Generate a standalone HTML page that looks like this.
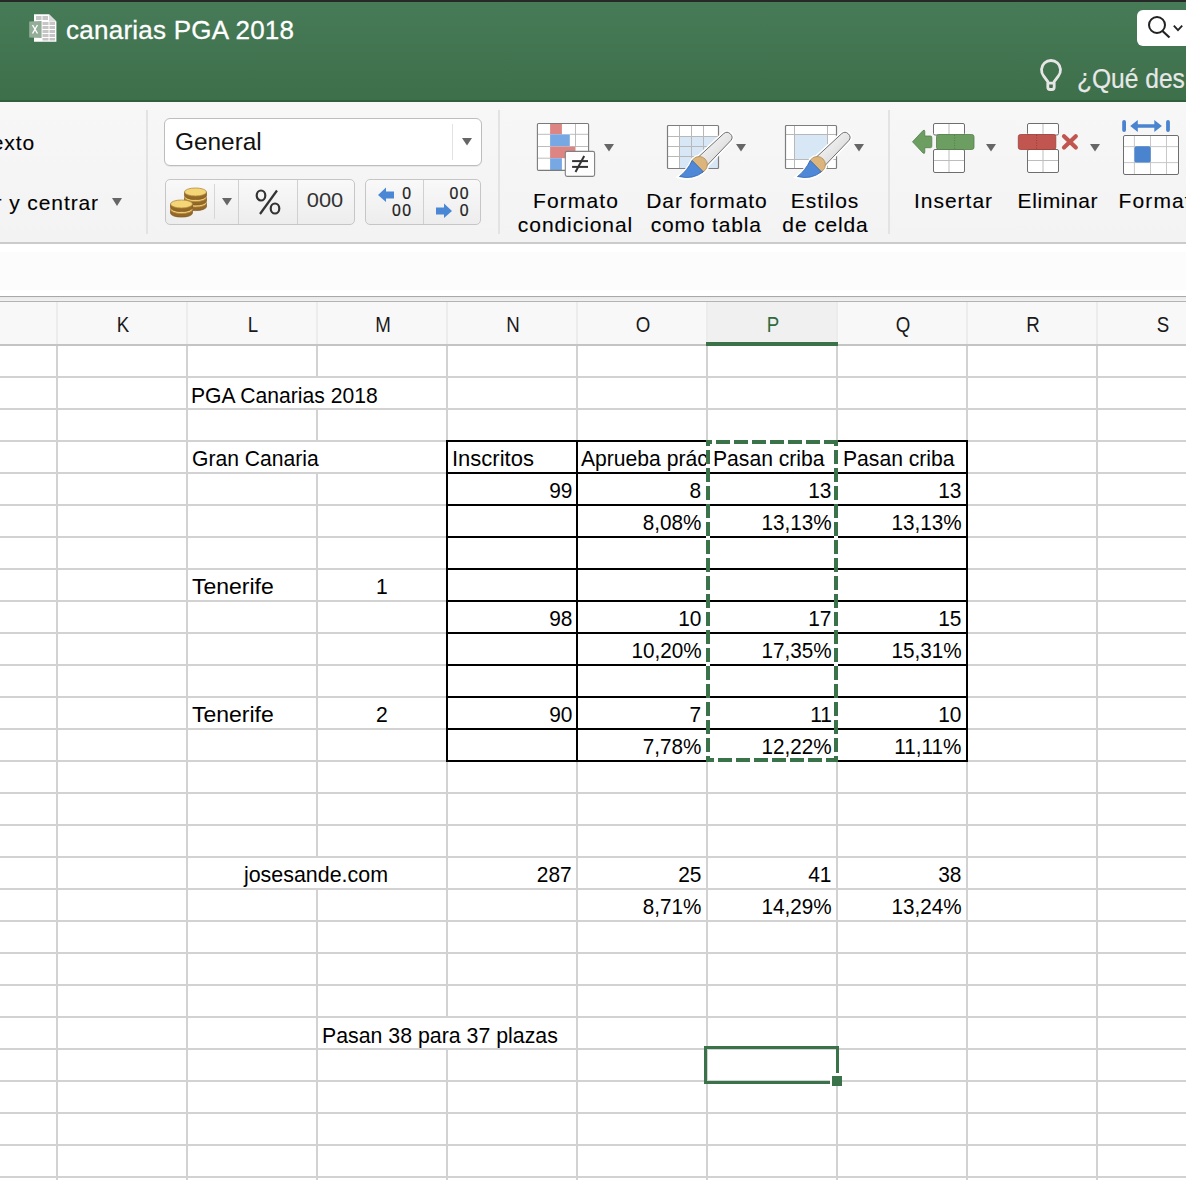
<!DOCTYPE html><html><head><meta charset="utf-8"><style>
html,body{margin:0;padding:0;}
body{width:1186px;height:1180px;overflow:hidden;position:relative;background:#fff;font-family:"Liberation Sans", sans-serif;}
.r{position:absolute;}
.t{position:absolute;white-space:pre;font-family:"Liberation Sans", sans-serif;}
</style></head><body>
<div class="r" style="left:0px;top:0px;width:1186px;height:2px;background:#282828;"></div>
<div class="r" style="left:0px;top:2px;width:1186px;height:100px;background:linear-gradient(#477a56,#3c6f4a);"></div>
<div class="r" style="left:0px;top:100px;width:1186px;height:2px;background:#2f5f3d;"></div>
<div class="r" style="left:0px;top:102px;width:1186px;height:140px;background:linear-gradient(#f7f7f7,#f3f3f3);"></div>
<div class="r" style="left:0px;top:242px;width:1186px;height:2px;background:#cbcbcb;"></div>
<div class="r" style="left:0px;top:244px;width:1186px;height:52px;background:#ffffff;"></div>
<div class="r" style="left:0px;top:252px;width:1186px;height:38px;background:#fcfcfc;"></div>
<div class="r" style="left:0px;top:296px;width:1186px;height:1px;background:#a9a9a9;"></div>
<div class="r" style="left:0px;top:297px;width:1186px;height:4px;background:linear-gradient(#e9e9e9,#f2f2f2);"></div>
<div class="r" style="left:0px;top:301px;width:1186px;height:1px;background:#b3b3b3;"></div>
<div class="r" style="left:0px;top:302px;width:1186px;height:42px;background:#f8f8f8;"></div>
<div class="r" style="left:706px;top:302px;width:131px;height:42px;background:#f0f0f0;"></div>
<div class="r" style="left:0px;top:344px;width:1186px;height:2px;background:#c4c4c4;"></div>
<div class="r" style="left:56px;top:302px;width:2px;height:42px;background:#ececec;"></div>
<div class="r" style="left:56px;top:346px;width:2px;height:834px;background:#d2d2d2;"></div>
<div class="r" style="left:186px;top:302px;width:2px;height:42px;background:#ececec;"></div>
<div class="r" style="left:186px;top:346px;width:2px;height:834px;background:#d2d2d2;"></div>
<div class="r" style="left:316px;top:302px;width:2px;height:42px;background:#ececec;"></div>
<div class="r" style="left:316px;top:346px;width:2px;height:834px;background:#d2d2d2;"></div>
<div class="r" style="left:446px;top:302px;width:2px;height:42px;background:#ececec;"></div>
<div class="r" style="left:446px;top:346px;width:2px;height:834px;background:#d2d2d2;"></div>
<div class="r" style="left:576px;top:302px;width:2px;height:42px;background:#ececec;"></div>
<div class="r" style="left:576px;top:346px;width:2px;height:834px;background:#d2d2d2;"></div>
<div class="r" style="left:706px;top:302px;width:2px;height:42px;background:#ececec;"></div>
<div class="r" style="left:706px;top:346px;width:2px;height:834px;background:#d2d2d2;"></div>
<div class="r" style="left:836px;top:302px;width:2px;height:42px;background:#ececec;"></div>
<div class="r" style="left:836px;top:346px;width:2px;height:834px;background:#d2d2d2;"></div>
<div class="r" style="left:966px;top:302px;width:2px;height:42px;background:#ececec;"></div>
<div class="r" style="left:966px;top:346px;width:2px;height:834px;background:#d2d2d2;"></div>
<div class="r" style="left:1096px;top:302px;width:2px;height:42px;background:#ececec;"></div>
<div class="r" style="left:1096px;top:346px;width:2px;height:834px;background:#d2d2d2;"></div>
<div class="r" style="left:316px;top:378px;width:2px;height:31px;background:#ffffff;"></div>
<div class="r" style="left:316px;top:442px;width:2px;height:31px;background:#ffffff;"></div>
<div class="r" style="left:316px;top:858px;width:2px;height:31px;background:#ffffff;"></div>
<div class="r" style="left:446px;top:1018px;width:2px;height:31px;background:#ffffff;"></div>
<div class="r" style="left:0px;top:376px;width:1186px;height:2px;background:#d2d2d2;"></div>
<div class="r" style="left:0px;top:408px;width:1186px;height:2px;background:#d2d2d2;"></div>
<div class="r" style="left:0px;top:440px;width:1186px;height:2px;background:#d2d2d2;"></div>
<div class="r" style="left:0px;top:472px;width:1186px;height:2px;background:#d2d2d2;"></div>
<div class="r" style="left:0px;top:504px;width:1186px;height:2px;background:#d2d2d2;"></div>
<div class="r" style="left:0px;top:536px;width:1186px;height:2px;background:#d2d2d2;"></div>
<div class="r" style="left:0px;top:568px;width:1186px;height:2px;background:#d2d2d2;"></div>
<div class="r" style="left:0px;top:600px;width:1186px;height:2px;background:#d2d2d2;"></div>
<div class="r" style="left:0px;top:632px;width:1186px;height:2px;background:#d2d2d2;"></div>
<div class="r" style="left:0px;top:664px;width:1186px;height:2px;background:#d2d2d2;"></div>
<div class="r" style="left:0px;top:696px;width:1186px;height:2px;background:#d2d2d2;"></div>
<div class="r" style="left:0px;top:728px;width:1186px;height:2px;background:#d2d2d2;"></div>
<div class="r" style="left:0px;top:760px;width:1186px;height:2px;background:#d2d2d2;"></div>
<div class="r" style="left:0px;top:792px;width:1186px;height:2px;background:#d2d2d2;"></div>
<div class="r" style="left:0px;top:824px;width:1186px;height:2px;background:#d2d2d2;"></div>
<div class="r" style="left:0px;top:856px;width:1186px;height:2px;background:#d2d2d2;"></div>
<div class="r" style="left:0px;top:888px;width:1186px;height:2px;background:#d2d2d2;"></div>
<div class="r" style="left:0px;top:920px;width:1186px;height:2px;background:#d2d2d2;"></div>
<div class="r" style="left:0px;top:952px;width:1186px;height:2px;background:#d2d2d2;"></div>
<div class="r" style="left:0px;top:984px;width:1186px;height:2px;background:#d2d2d2;"></div>
<div class="r" style="left:0px;top:1016px;width:1186px;height:2px;background:#d2d2d2;"></div>
<div class="r" style="left:0px;top:1048px;width:1186px;height:2px;background:#d2d2d2;"></div>
<div class="r" style="left:0px;top:1080px;width:1186px;height:2px;background:#d2d2d2;"></div>
<div class="r" style="left:0px;top:1112px;width:1186px;height:2px;background:#d2d2d2;"></div>
<div class="r" style="left:0px;top:1144px;width:1186px;height:2px;background:#d2d2d2;"></div>
<div class="r" style="left:0px;top:1176px;width:1186px;height:2px;background:#d2d2d2;"></div>
<div class="t" style="left:-177.5px;width:600px;top:313.88px;font-size:22px;line-height:22px;color:#1a1a1a;text-align:center;transform-origin:50% 0;transform:scaleX(0.85);">K</div>
<div class="t" style="left:-47.5px;width:600px;top:313.88px;font-size:22px;line-height:22px;color:#1a1a1a;text-align:center;transform-origin:50% 0;transform:scaleX(0.85);">L</div>
<div class="t" style="left:82.5px;width:600px;top:313.88px;font-size:22px;line-height:22px;color:#1a1a1a;text-align:center;transform-origin:50% 0;transform:scaleX(0.85);">M</div>
<div class="t" style="left:212.5px;width:600px;top:313.88px;font-size:22px;line-height:22px;color:#1a1a1a;text-align:center;transform-origin:50% 0;transform:scaleX(0.85);">N</div>
<div class="t" style="left:342.5px;width:600px;top:313.88px;font-size:22px;line-height:22px;color:#1a1a1a;text-align:center;transform-origin:50% 0;transform:scaleX(0.85);">O</div>
<div class="t" style="left:472.5px;width:600px;top:313.88px;font-size:22px;line-height:22px;color:#2f6b3f;text-align:center;transform-origin:50% 0;transform:scaleX(0.85);">P</div>
<div class="t" style="left:602.5px;width:600px;top:313.88px;font-size:22px;line-height:22px;color:#1a1a1a;text-align:center;transform-origin:50% 0;transform:scaleX(0.85);">Q</div>
<div class="t" style="left:732.5px;width:600px;top:313.88px;font-size:22px;line-height:22px;color:#1a1a1a;text-align:center;transform-origin:50% 0;transform:scaleX(0.85);">R</div>
<div class="t" style="left:862.5px;width:600px;top:313.88px;font-size:22px;line-height:22px;color:#1a1a1a;text-align:center;transform-origin:50% 0;transform:scaleX(0.85);">S</div>
<div class="r" style="left:706px;top:342px;width:132px;height:4px;background:#3b7248;"></div>
<div class="r" style="left:446px;top:440px;width:2px;height:322px;background:#000;"></div>
<div class="r" style="left:576px;top:440px;width:2px;height:322px;background:#000;"></div>
<div class="r" style="left:706px;top:440px;width:2px;height:322px;background:#000;"></div>
<div class="r" style="left:836px;top:440px;width:2px;height:322px;background:#000;"></div>
<div class="r" style="left:966px;top:440px;width:2px;height:322px;background:#000;"></div>
<div class="r" style="left:446px;top:440px;width:522px;height:2px;background:#000;"></div>
<div class="r" style="left:446px;top:472px;width:522px;height:2px;background:#000;"></div>
<div class="r" style="left:446px;top:504px;width:522px;height:2px;background:#000;"></div>
<div class="r" style="left:446px;top:536px;width:522px;height:2px;background:#000;"></div>
<div class="r" style="left:446px;top:568px;width:522px;height:2px;background:#000;"></div>
<div class="r" style="left:446px;top:600px;width:522px;height:2px;background:#000;"></div>
<div class="r" style="left:446px;top:632px;width:522px;height:2px;background:#000;"></div>
<div class="r" style="left:446px;top:664px;width:522px;height:2px;background:#000;"></div>
<div class="r" style="left:446px;top:696px;width:522px;height:2px;background:#000;"></div>
<div class="r" style="left:446px;top:728px;width:522px;height:2px;background:#000;"></div>
<div class="r" style="left:446px;top:760px;width:522px;height:2px;background:#000;"></div>
<div class="t" style="left:191px;top:384.88px;font-size:22px;line-height:22px;color:#000;transform-origin:0 0;transform:scaleX(0.96);">PGA Canarias 2018</div>
<div class="t" style="left:191.5px;top:448.38px;font-size:22px;line-height:22px;color:#000;transform-origin:0 0;transform:scaleX(0.959);">Gran Canaria</div>
<div class="t" style="left:452px;top:448.38px;font-size:22px;line-height:22px;color:#000;transform-origin:0 0;">Inscritos</div>
<div class="r" style="left:578px;top:443px;width:128px;height:29px;overflow:hidden;"><div class="t" style="left:3px;top:5.38px;font-size:22px;line-height:22px;transform-origin:0 0;transform:scaleX(0.96)">Aprueba práctica</div></div>
<div class="t" style="left:712.5px;top:448.38px;font-size:22px;line-height:22px;color:#000;transform-origin:0 0;transform:scaleX(0.96);">Pasan criba</div>
<div class="t" style="left:842.5px;top:448.38px;font-size:22px;line-height:22px;color:#000;transform-origin:0 0;transform:scaleX(0.96);">Pasan criba</div>
<div class="t" style="right:614px;top:480.38px;font-size:22px;line-height:22px;color:#000;text-align:right;transform-origin:100% 0;transform:scaleX(0.95);">99</div>
<div class="t" style="right:484.5px;top:480.38px;font-size:22px;line-height:22px;color:#000;text-align:right;transform-origin:100% 0;transform:scaleX(0.95);">8</div>
<div class="t" style="right:354.5px;top:480.38px;font-size:22px;line-height:22px;color:#000;text-align:right;transform-origin:100% 0;transform:scaleX(0.95);">13</div>
<div class="t" style="right:224.5px;top:480.38px;font-size:22px;line-height:22px;color:#000;text-align:right;transform-origin:100% 0;transform:scaleX(0.95);">13</div>
<div class="t" style="right:484.5px;top:512.38px;font-size:22px;line-height:22px;color:#000;text-align:right;transform-origin:100% 0;transform:scaleX(0.94);">8,08%</div>
<div class="t" style="right:354.5px;top:512.38px;font-size:22px;line-height:22px;color:#000;text-align:right;transform-origin:100% 0;transform:scaleX(0.94);">13,13%</div>
<div class="t" style="right:224.5px;top:512.38px;font-size:22px;line-height:22px;color:#000;text-align:right;transform-origin:100% 0;transform:scaleX(0.94);">13,13%</div>
<div class="t" style="left:192px;top:576.38px;font-size:22px;line-height:22px;color:#000;transform-origin:0 0;transform:scaleX(1.045);">Tenerife</div>
<div class="t" style="left:82px;width:600px;top:576.38px;font-size:22px;line-height:22px;color:#000;text-align:center;transform-origin:50% 0;transform:scaleX(0.96);">1</div>
<div class="t" style="right:614px;top:608.38px;font-size:22px;line-height:22px;color:#000;text-align:right;transform-origin:100% 0;transform:scaleX(0.95);">98</div>
<div class="t" style="right:484.5px;top:608.38px;font-size:22px;line-height:22px;color:#000;text-align:right;transform-origin:100% 0;transform:scaleX(0.95);">10</div>
<div class="t" style="right:354.5px;top:608.38px;font-size:22px;line-height:22px;color:#000;text-align:right;transform-origin:100% 0;transform:scaleX(0.95);">17</div>
<div class="t" style="right:224.5px;top:608.38px;font-size:22px;line-height:22px;color:#000;text-align:right;transform-origin:100% 0;transform:scaleX(0.95);">15</div>
<div class="t" style="right:484.5px;top:640.38px;font-size:22px;line-height:22px;color:#000;text-align:right;transform-origin:100% 0;transform:scaleX(0.94);">10,20%</div>
<div class="t" style="right:354.5px;top:640.38px;font-size:22px;line-height:22px;color:#000;text-align:right;transform-origin:100% 0;transform:scaleX(0.94);">17,35%</div>
<div class="t" style="right:224.5px;top:640.38px;font-size:22px;line-height:22px;color:#000;text-align:right;transform-origin:100% 0;transform:scaleX(0.94);">15,31%</div>
<div class="t" style="left:192px;top:704.38px;font-size:22px;line-height:22px;color:#000;transform-origin:0 0;transform:scaleX(1.045);">Tenerife</div>
<div class="t" style="left:82px;width:600px;top:704.38px;font-size:22px;line-height:22px;color:#000;text-align:center;transform-origin:50% 0;transform:scaleX(0.96);">2</div>
<div class="t" style="right:614px;top:704.38px;font-size:22px;line-height:22px;color:#000;text-align:right;transform-origin:100% 0;transform:scaleX(0.95);">90</div>
<div class="t" style="right:484.5px;top:704.38px;font-size:22px;line-height:22px;color:#000;text-align:right;transform-origin:100% 0;transform:scaleX(0.95);">7</div>
<div class="t" style="right:354.5px;top:704.38px;font-size:22px;line-height:22px;color:#000;text-align:right;transform-origin:100% 0;transform:scaleX(0.95);">11</div>
<div class="t" style="right:224.5px;top:704.38px;font-size:22px;line-height:22px;color:#000;text-align:right;transform-origin:100% 0;transform:scaleX(0.95);">10</div>
<div class="t" style="right:484.5px;top:736.38px;font-size:22px;line-height:22px;color:#000;text-align:right;transform-origin:100% 0;transform:scaleX(0.94);">7,78%</div>
<div class="t" style="right:354.5px;top:736.38px;font-size:22px;line-height:22px;color:#000;text-align:right;transform-origin:100% 0;transform:scaleX(0.94);">12,22%</div>
<div class="t" style="right:224.5px;top:736.38px;font-size:22px;line-height:22px;color:#000;text-align:right;transform-origin:100% 0;transform:scaleX(0.94);">11,11%</div>
<div class="t" style="left:16px;width:600px;top:864.38px;font-size:22px;line-height:22px;color:#000;text-align:center;transform-origin:50% 0;transform:scaleX(0.974);">josesande.com</div>
<div class="t" style="right:614px;top:864.38px;font-size:22px;line-height:22px;color:#000;text-align:right;transform-origin:100% 0;transform:scaleX(0.95);">287</div>
<div class="t" style="right:484.5px;top:864.38px;font-size:22px;line-height:22px;color:#000;text-align:right;transform-origin:100% 0;transform:scaleX(0.95);">25</div>
<div class="t" style="right:354.5px;top:864.38px;font-size:22px;line-height:22px;color:#000;text-align:right;transform-origin:100% 0;transform:scaleX(0.95);">41</div>
<div class="t" style="right:224.5px;top:864.38px;font-size:22px;line-height:22px;color:#000;text-align:right;transform-origin:100% 0;transform:scaleX(0.95);">38</div>
<div class="t" style="right:484.5px;top:896.38px;font-size:22px;line-height:22px;color:#000;text-align:right;transform-origin:100% 0;transform:scaleX(0.94);">8,71%</div>
<div class="t" style="right:354.5px;top:896.38px;font-size:22px;line-height:22px;color:#000;text-align:right;transform-origin:100% 0;transform:scaleX(0.94);">14,29%</div>
<div class="t" style="right:224.5px;top:896.38px;font-size:22px;line-height:22px;color:#000;text-align:right;transform-origin:100% 0;transform:scaleX(0.94);">13,24%</div>
<div class="t" style="left:321.5px;top:1024.88px;font-size:22px;line-height:22px;color:#000;transform-origin:0 0;transform:scaleX(0.969);">Pasan 38 para 37 plazas</div>
<svg class="r" style="left:0;top:0" width="1186" height="1180"><rect x="706" y="440" width="132" height="4" fill="#fff"/><rect x="706" y="758" width="132" height="4" fill="#fff"/><rect x="706" y="440" width="4" height="322" fill="#fff"/><rect x="834" y="440" width="4" height="322" fill="#fff"/><rect x="706" y="440" width="6" height="4" fill="#3a7349"/><rect x="716" y="440" width="14" height="4" fill="#3a7349"/><rect x="734" y="440" width="14" height="4" fill="#3a7349"/><rect x="752" y="440" width="14" height="4" fill="#3a7349"/><rect x="770" y="440" width="14" height="4" fill="#3a7349"/><rect x="788" y="440" width="14" height="4" fill="#3a7349"/><rect x="806" y="440" width="14" height="4" fill="#3a7349"/><rect x="824" y="440" width="14" height="4" fill="#3a7349"/><rect x="706" y="758" width="8" height="4" fill="#3a7349"/><rect x="718" y="758" width="14" height="4" fill="#3a7349"/><rect x="736" y="758" width="14" height="4" fill="#3a7349"/><rect x="754" y="758" width="14" height="4" fill="#3a7349"/><rect x="772" y="758" width="14" height="4" fill="#3a7349"/><rect x="790" y="758" width="14" height="4" fill="#3a7349"/><rect x="808" y="758" width="14" height="4" fill="#3a7349"/><rect x="826" y="758" width="12" height="4" fill="#3a7349"/><rect x="706" y="440" width="4" height="6" fill="#3a7349"/><rect x="706" y="450" width="4" height="14" fill="#3a7349"/><rect x="706" y="468" width="4" height="14" fill="#3a7349"/><rect x="706" y="486" width="4" height="14" fill="#3a7349"/><rect x="706" y="504" width="4" height="14" fill="#3a7349"/><rect x="706" y="522" width="4" height="14" fill="#3a7349"/><rect x="706" y="540" width="4" height="14" fill="#3a7349"/><rect x="706" y="558" width="4" height="14" fill="#3a7349"/><rect x="706" y="576" width="4" height="14" fill="#3a7349"/><rect x="706" y="594" width="4" height="14" fill="#3a7349"/><rect x="706" y="612" width="4" height="14" fill="#3a7349"/><rect x="706" y="630" width="4" height="14" fill="#3a7349"/><rect x="706" y="648" width="4" height="14" fill="#3a7349"/><rect x="706" y="666" width="4" height="14" fill="#3a7349"/><rect x="706" y="684" width="4" height="14" fill="#3a7349"/><rect x="706" y="702" width="4" height="14" fill="#3a7349"/><rect x="706" y="720" width="4" height="14" fill="#3a7349"/><rect x="706" y="738" width="4" height="14" fill="#3a7349"/><rect x="706" y="756" width="4" height="6" fill="#3a7349"/><rect x="834" y="440" width="4" height="6" fill="#3a7349"/><rect x="834" y="450" width="4" height="14" fill="#3a7349"/><rect x="834" y="468" width="4" height="14" fill="#3a7349"/><rect x="834" y="486" width="4" height="14" fill="#3a7349"/><rect x="834" y="504" width="4" height="14" fill="#3a7349"/><rect x="834" y="522" width="4" height="14" fill="#3a7349"/><rect x="834" y="540" width="4" height="14" fill="#3a7349"/><rect x="834" y="558" width="4" height="14" fill="#3a7349"/><rect x="834" y="576" width="4" height="14" fill="#3a7349"/><rect x="834" y="594" width="4" height="14" fill="#3a7349"/><rect x="834" y="612" width="4" height="14" fill="#3a7349"/><rect x="834" y="630" width="4" height="14" fill="#3a7349"/><rect x="834" y="648" width="4" height="14" fill="#3a7349"/><rect x="834" y="666" width="4" height="14" fill="#3a7349"/><rect x="834" y="684" width="4" height="14" fill="#3a7349"/><rect x="834" y="702" width="4" height="14" fill="#3a7349"/><rect x="834" y="720" width="4" height="14" fill="#3a7349"/><rect x="834" y="738" width="4" height="14" fill="#3a7349"/><rect x="834" y="756" width="4" height="6" fill="#3a7349"/><rect x="705.5" y="1047.5" width="132" height="35" fill="none" stroke="#3a7349" stroke-width="3"/></svg>
<div class="r" style="left:830px;top:1073px;width:12px;height:13px;background:#fff;"></div>
<div class="r" style="left:832px;top:1076px;width:10px;height:10px;background:#3a7349;"></div>
<div class="t" style="left:66px;top:17.29px;font-size:26px;line-height:26px;color:#ffffff;transform-origin:0 0;letter-spacing:0.25px;-webkit-text-stroke:0.3px #fff;">canarias PGA 2018</div>
<svg class="r" style="left:26px;top:12px" width="34" height="34" viewBox="0 0 34 34">
<path d="M8 2.2 H23 L30.4 9.6 V29.7 H8 Z" fill="#ffffff"/>
<path d="M23 2.2 V9.6 H30.4 Z" fill="#dcdcdc"/>
<g fill="#c6c6c6">
<rect x="10" y="4" width="5.5" height="4"/><rect x="16.5" y="4" width="5.5" height="4"/>
<rect x="16.5" y="10" width="6" height="3"/><rect x="23.5" y="10" width="5.5" height="3"/>
<rect x="16.5" y="14" width="6" height="3"/><rect x="23.5" y="14" width="5.5" height="3"/>
<rect x="16.5" y="18" width="6" height="3"/><rect x="23.5" y="18" width="5.5" height="3"/>
<rect x="16.5" y="22" width="6" height="3"/><rect x="23.5" y="22" width="5.5" height="3"/>
<rect x="16.5" y="26" width="6" height="2.5"/><rect x="23.5" y="26" width="5.5" height="2.5"/>
</g>
<path d="M3.2 9.5 L15.6 8.9 V26.1 L3.2 25.5 Z" fill="#93ad98"/>
<path d="M6.5 13 L11.5 21.5 M11.5 13 L6.5 21.5" stroke="#fff" stroke-width="1.4"/>
</svg>
<div class="r" style="left:1137px;top:10px;width:60px;height:36px;background:#fff;border-radius:6px;"></div>
<svg class="r" style="left:1140px;top:10px" width="46" height="36" viewBox="0 0 46 36">
<circle cx="17" cy="15" r="8" fill="none" stroke="#222" stroke-width="2"/>
<line x1="22.5" y1="21" x2="29.5" y2="27.5" stroke="#222" stroke-width="2.2"/>
<polyline points="33.8,15.6 38,20.2 42.2,15.6" fill="none" stroke="#222" stroke-width="1.8"/>
</svg>
<svg class="r" style="left:1036px;top:56px" width="30" height="38" viewBox="0 0 30 38">
<path d="M7.7 20.1 A9.5 9.5 0 1 1 22.3 20.1 L18.2 25.6 L18.2 31.3 Q18.2 33.5 16 33.5 L14 33.5 Q11.8 33.5 11.8 31.3 L11.8 25.6 Z M11.8 27.2 L18.2 27.2" fill="none" stroke="#e6e6e6" stroke-width="2.8" stroke-linejoin="round"/>
</svg>
<div class="t" style="left:1077px;top:66.14px;font-size:27px;line-height:27px;color:#e8e8e8;transform-origin:0 0;transform:scaleX(0.91);-webkit-text-stroke:0.2px #e8e8e8;">¿Qué des</div>
<div class="r" style="left:146px;top:110px;width:2px;height:124px;background:#e3e3e3;"></div>
<div class="r" style="left:498px;top:110px;width:2px;height:124px;background:#e3e3e3;"></div>
<div class="r" style="left:888px;top:110px;width:2px;height:124px;background:#e3e3e3;"></div>
<div class="t" style="right:1151px;top:132.22px;font-size:21px;line-height:21px;color:#000;text-align:right;transform-origin:100% 0;letter-spacing:0.9px;-webkit-text-stroke:0.12px #000;">Ajustar texto</div>
<div class="t" style="right:1087px;top:191.72px;font-size:21px;line-height:21px;color:#000;text-align:right;transform-origin:100% 0;letter-spacing:0.9px;-webkit-text-stroke:0.12px #000;">Combinar y centrar</div>
<svg class="r" style="left:112px;top:198px" width="10" height="8"><polygon points="0,0 10,0 5.0,8" fill="#666"/></svg>
<div class="r" style="left:164px;top:118px;width:316px;height:46px;background:#fff;border:1px solid #bdbdbd;border-radius:6px;box-shadow:0 1px 0 rgba(0,0,0,0.06)"></div>
<div class="r" style="left:452px;top:124px;width:1px;height:36px;background:#e2e2e2;"></div>
<svg class="r" style="left:462px;top:138px" width="10" height="7.5"><polygon points="0,0 10,0 5.0,7.5" fill="#666"/></svg>
<div class="t" style="left:175px;top:129.65px;font-size:24.4px;line-height:24.4px;color:#111;transform-origin:0 0;">General</div>
<div class="r" style="left:165px;top:179px;width:188px;height:44px;background:linear-gradient(#f9f9f9,#ededed);border:1px solid #c6c6c6;border-radius:5px;"></div>
<div class="r" style="left:214px;top:184px;width:1px;height:35px;background:#d6d6d6;"></div>
<div class="r" style="left:238px;top:180px;width:1px;height:44px;background:#d0d0d0;"></div>
<div class="r" style="left:297px;top:180px;width:1px;height:44px;background:#d0d0d0;"></div>
<svg class="r" style="left:222px;top:198px" width="10" height="7.5"><polygon points="0,0 10,0 5.0,7.5" fill="#666"/></svg>
<svg class="r" style="left:166px;top:184px" width="46" height="38" viewBox="0 0 46 38"><path d="M18.5 19 L18.5 22.6 A11 4 0 0 0 40.5 22.6 L40.5 19 Z" fill="#936829" stroke="#7f5720" stroke-width="0.7"/><ellipse cx="29.5" cy="19" rx="11" ry="4" fill="#f4d677" stroke="#b58a42" stroke-width="0.8"/><path d="M18.5 13.5 L18.5 17.1 A11 4 0 0 0 40.5 17.1 L40.5 13.5 Z" fill="#936829" stroke="#7f5720" stroke-width="0.7"/><ellipse cx="29.5" cy="13.5" rx="11" ry="4" fill="#f4d677" stroke="#b58a42" stroke-width="0.8"/><path d="M18.5 8 L18.5 11.6 A11 4 0 0 0 40.5 11.6 L40.5 8 Z" fill="#936829" stroke="#7f5720" stroke-width="0.7"/><ellipse cx="29.5" cy="8" rx="11" ry="4" fill="#f4d677" stroke="#b58a42" stroke-width="0.8"/><path d="M4.5 25.5 L4.5 29.1 A11 4 0 0 0 26.5 29.1 L26.5 25.5 Z" fill="#936829" stroke="#7f5720" stroke-width="0.7"/><ellipse cx="15.5" cy="25.5" rx="11" ry="4" fill="#f4d677" stroke="#b58a42" stroke-width="0.8"/><path d="M4.5 20 L4.5 23.6 A11 4 0 0 0 26.5 23.6 L26.5 20 Z" fill="#936829" stroke="#7f5720" stroke-width="0.7"/><ellipse cx="15.5" cy="20" rx="11" ry="4" fill="#f4d677" stroke="#b58a42" stroke-width="0.8"/></svg>
<svg class="r" style="left:253px;top:188px" width="30" height="28" viewBox="0 0 30 28"><g fill="none" stroke="#333" stroke-width="2.2"><ellipse cx="8" cy="7.5" rx="4.3" ry="5"/><ellipse cx="22" cy="20.5" rx="4.3" ry="5"/><line x1="24" y1="2.5" x2="7" y2="26"/></g></svg>
<div class="t" style="left:25px;width:600px;top:191.49px;font-size:19.5px;line-height:19.5px;color:#333;text-align:center;transform-origin:50% 0;transform:scaleX(1.12);">000</div>
<div class="r" style="left:365px;top:179px;width:114px;height:44px;background:linear-gradient(#f9f9f9,#ededed);border:1px solid #c6c6c6;border-radius:5px;"></div>
<div class="r" style="left:423px;top:180px;width:1px;height:44px;background:#d0d0d0;"></div>
<svg class="r" style="left:376px;top:186px" width="20" height="18" viewBox="0 0 20 18"><polygon points="2,9 10,1.5 10,5.5 18,5.5 18,12.5 10,12.5 10,16" fill="#4a88d6"/></svg>
<svg class="r" style="left:434px;top:202px" width="20" height="18" viewBox="0 0 20 18"><polygon points="18,9 10,1.5 10,5.5 2,5.5 2,12.5 10,12.5 10,16" fill="#4a88d6"/></svg>
<div class="t" style="right:775px;top:186.23px;font-size:15.8px;line-height:15.8px;color:#222;text-align:right;transform-origin:100% 0;-webkit-text-stroke:0.2px #222;">0</div>
<div class="t" style="right:773.5px;top:202.73px;font-size:15.8px;line-height:15.8px;color:#222;text-align:right;transform-origin:100% 0;letter-spacing:1.5px;-webkit-text-stroke:0.2px #222;">00</div>
<div class="t" style="right:716px;top:186.23px;font-size:15.8px;line-height:15.8px;color:#222;text-align:right;transform-origin:100% 0;letter-spacing:1.5px;-webkit-text-stroke:0.2px #222;">00</div>
<div class="t" style="right:717.5px;top:202.73px;font-size:15.8px;line-height:15.8px;color:#222;text-align:right;transform-origin:100% 0;-webkit-text-stroke:0.2px #222;">0</div>
<div class="t" style="left:276px;width:600px;top:190.22px;font-size:21px;line-height:21px;color:#000;text-align:center;transform-origin:50% 0;letter-spacing:1.13px;-webkit-text-stroke:0.12px #000;">Formato</div>
<div class="t" style="left:275.5px;width:600px;top:214.22px;font-size:21px;line-height:21px;color:#000;text-align:center;transform-origin:50% 0;letter-spacing:0.93px;-webkit-text-stroke:0.12px #000;">condicional</div>
<div class="t" style="left:407px;width:600px;top:190.22px;font-size:21px;line-height:21px;color:#000;text-align:center;transform-origin:50% 0;letter-spacing:0.97px;-webkit-text-stroke:0.12px #000;">Dar formato</div>
<div class="t" style="left:406.29999999999995px;width:600px;top:214.22px;font-size:21px;line-height:21px;color:#000;text-align:center;transform-origin:50% 0;letter-spacing:0.84px;-webkit-text-stroke:0.12px #000;">como tabla</div>
<div class="t" style="left:525px;width:600px;top:190.22px;font-size:21px;line-height:21px;color:#000;text-align:center;transform-origin:50% 0;letter-spacing:0.93px;-webkit-text-stroke:0.12px #000;">Estilos</div>
<div class="t" style="left:525.5px;width:600px;top:214.22px;font-size:21px;line-height:21px;color:#000;text-align:center;transform-origin:50% 0;letter-spacing:0.86px;-webkit-text-stroke:0.12px #000;">de celda</div>
<div class="t" style="left:653.5px;width:600px;top:190.22px;font-size:21px;line-height:21px;color:#000;text-align:center;transform-origin:50% 0;letter-spacing:1.0px;-webkit-text-stroke:0.12px #000;">Insertar</div>
<div class="t" style="left:757.8px;width:600px;top:190.22px;font-size:21px;line-height:21px;color:#000;text-align:center;transform-origin:50% 0;letter-spacing:0.57px;-webkit-text-stroke:0.12px #000;">Eliminar</div>
<div class="t" style="left:1118.5px;top:190.22px;font-size:21px;line-height:21px;color:#000;transform-origin:0 0;letter-spacing:1.13px;-webkit-text-stroke:0.12px #000;">Formato</div>
<svg class="r" style="left:604px;top:144px" width="10" height="7.5"><polygon points="0,0 10,0 5.0,7.5" fill="#666"/></svg>
<svg class="r" style="left:736px;top:144px" width="10" height="7.5"><polygon points="0,0 10,0 5.0,7.5" fill="#666"/></svg>
<svg class="r" style="left:854px;top:144px" width="10" height="7.5"><polygon points="0,0 10,0 5.0,7.5" fill="#666"/></svg>
<svg class="r" style="left:986px;top:144px" width="10" height="7.5"><polygon points="0,0 10,0 5.0,7.5" fill="#666"/></svg>
<svg class="r" style="left:1090px;top:144px" width="10" height="7.5"><polygon points="0,0 10,0 5.0,7.5" fill="#666"/></svg>
<svg class="r" style="left:536px;top:122px" width="62" height="58" viewBox="0 0 62 58">
<rect x="1.4" y="1.5" width="51.2" height="46.9" rx="1" fill="#fff"/>
<rect x="14.1" y="1.5" width="11.8" height="10.8" fill="#dc8582"/>
<rect x="14.1" y="12.3" width="19.7" height="12.2" fill="#78a8e4"/>
<rect x="14.1" y="24.5" width="25.4" height="11.7" fill="#dc8582"/>
<rect x="14.1" y="36.2" width="11.8" height="12.2" fill="#78a8e4"/>
<g stroke="#b5b5b5" stroke-width="0.9">
<line x1="39.5" y1="2" x2="39.5" y2="24.5"/>
<line x1="2" y1="12.3" x2="14.1" y2="12.3"/><line x1="33.8" y1="12.3" x2="52" y2="12.3"/>
<line x1="2" y1="24.5" x2="14.1" y2="24.5"/><line x1="33.8" y1="24.5" x2="52" y2="24.5"/>
<line x1="2" y1="36.2" x2="14.1" y2="36.2"/><line x1="39.5" y1="36.2" x2="52" y2="36.2"/>
</g>
<rect x="1.4" y="1.5" width="51.2" height="46.9" rx="1.2" fill="none" stroke="#7a7a7a" stroke-width="1.1"/>
<rect x="29.3" y="29.4" width="29.3" height="25" rx="1.8" fill="#fdfdfd" stroke="#808080" stroke-width="1.1"/>
<g stroke="#333" stroke-width="2" stroke-linecap="butt">
<line x1="36.1" y1="39.1" x2="52" y2="39.1"/><line x1="36.1" y1="44.9" x2="52" y2="44.9"/>
<line x1="48.2" y1="33.9" x2="39.5" y2="49.9"/>
</g>
</svg>
<svg class="r" style="left:666px;top:124px" width="72" height="58" viewBox="0 0 72 58"><defs><linearGradient id="hg" x1="0" y1="0" x2="1" y2="1"><stop offset="0" stop-color="#ffffff"/><stop offset="1" stop-color="#cfcfcf"/></linearGradient></defs><rect x="1.5" y="1.5" width="51" height="43" rx="1" fill="#fff"/><rect x="14" y="12.5" width="38.5" height="32" fill="#d8e7f5"/><g stroke="#b8b8b8" stroke-width="1"><line x1="13.5" y1="2" x2="13.5" y2="44"/><line x1="25.5" y1="2" x2="25.5" y2="44"/><line x1="37.5" y1="2" x2="37.5" y2="44"/><line x1="2" y1="12.5" x2="52" y2="12.5"/><line x1="2" y1="22.5" x2="52" y2="22.5"/><line x1="2" y1="32.5" x2="52" y2="32.5"/></g><rect x="1.5" y="1.5" width="51" height="43" rx="1" fill="none" stroke="#7d7d7d" stroke-width="1.2"/><path d="M31.8 33.6 L57.6 9.7 A5 5 0 0 1 64.7 16.7 L40.3 42.2 Z" fill="#fff" stroke="#fff" stroke-width="4"/><circle cx="33.2" cy="40.7" r="10" fill="#fff"/><path d="M26.2 36.4 L37.4 47.8 Q27 57 12.5 53 Q21 47 26.2 36.4 Z" fill="#fff" stroke="#fff" stroke-width="3"/><path d="M31.8 33.6 L57.6 9.7 A5 5 0 0 1 64.7 16.7 L40.3 42.2 Z" fill="url(#hg)" stroke="#6f6f6f" stroke-width="1"/><circle cx="33.2" cy="40.7" r="8.2" fill="#dcb57c" stroke="#b08a55" stroke-width="0.8"/><path d="M26.2 36.4 L37.4 47.8 Q27 56 13.5 52.5 Q21 47 26.2 36.4 Z" fill="#4f88d6" stroke="#2d62b0" stroke-width="0.8"/></svg>
<svg class="r" style="left:784px;top:124px" width="72" height="58" viewBox="0 0 72 58"><defs><linearGradient id="hg" x1="0" y1="0" x2="1" y2="1"><stop offset="0" stop-color="#ffffff"/><stop offset="1" stop-color="#cfcfcf"/></linearGradient></defs><rect x="1.5" y="1.5" width="51" height="43" rx="1" fill="#fff"/><rect x="10.5" y="10.5" width="33" height="25" fill="#d8e7f5"/><g stroke="#b8b8b8" stroke-width="1"><line x1="2" y1="10.5" x2="52" y2="10.5"/><line x1="2" y1="35.5" x2="52" y2="35.5"/><line x1="10.5" y1="2" x2="10.5" y2="44"/><line x1="43.5" y1="2" x2="43.5" y2="44"/></g><rect x="1.5" y="1.5" width="51" height="43" rx="1" fill="none" stroke="#7d7d7d" stroke-width="1.2"/><path d="M31.8 33.6 L57.6 9.7 A5 5 0 0 1 64.7 16.7 L40.3 42.2 Z" fill="#fff" stroke="#fff" stroke-width="4"/><circle cx="33.2" cy="40.7" r="10" fill="#fff"/><path d="M26.2 36.4 L37.4 47.8 Q27 57 12.5 53 Q21 47 26.2 36.4 Z" fill="#fff" stroke="#fff" stroke-width="3"/><path d="M31.8 33.6 L57.6 9.7 A5 5 0 0 1 64.7 16.7 L40.3 42.2 Z" fill="url(#hg)" stroke="#6f6f6f" stroke-width="1"/><circle cx="33.2" cy="40.7" r="8.2" fill="#dcb57c" stroke="#b08a55" stroke-width="0.8"/><path d="M26.2 36.4 L37.4 47.8 Q27 56 13.5 52.5 Q21 47 26.2 36.4 Z" fill="#4f88d6" stroke="#2d62b0" stroke-width="0.8"/></svg>
<svg class="r" style="left:0;top:0;width:1186px;height:200px" width="1186" height="200" viewBox="0 0 1186 200"><rect x="933.5" y="123.5" width="31" height="11.5" rx="1.5" fill="#fff" stroke="#6e6e6e" stroke-width="1"/><line x1="949" y1="124" x2="949" y2="134.5" stroke="#bdbdbd"/><rect x="933.5" y="149.5" width="31" height="23" rx="1.5" fill="#fff" stroke="#6e6e6e" stroke-width="1"/><line x1="949" y1="150" x2="949" y2="172" stroke="#bdbdbd"/><line x1="934" y1="160.5" x2="964" y2="160.5" stroke="#bdbdbd"/><rect x="936.5" y="134.5" width="37.5" height="15" rx="2.2" fill="#6b9e60" stroke="#557f4b" stroke-width="0.8"/><line x1="954.6" y1="135" x2="954.6" y2="149" stroke="#4f7a45" stroke-width="0.8" stroke-dasharray="1,1.5"/><path d="M912.5 141.8 L923 130.6 Q924.8 129.4 924.8 131.5 L924.8 136 L930.5 136 Q931.8 136 931.8 137.4 L931.8 146.3 Q931.8 147.7 930.5 147.7 L924.8 147.7 L924.8 152 Q924.8 154.2 923 153 Z" fill="#6b9e60" stroke="#557f4b" stroke-width="0.8"/><rect x="1027.5" y="123.5" width="31" height="11.5" rx="1.5" fill="#fff" stroke="#6e6e6e" stroke-width="1"/><line x1="1043" y1="124" x2="1043" y2="134.5" stroke="#bdbdbd"/><rect x="1027.5" y="149.5" width="31" height="23" rx="1.5" fill="#fff" stroke="#6e6e6e" stroke-width="1"/><line x1="1043" y1="150" x2="1043" y2="172" stroke="#bdbdbd"/><line x1="1028" y1="160.5" x2="1058" y2="160.5" stroke="#bdbdbd"/><rect x="1018.3" y="134.5" width="37.5" height="15" rx="2.2" fill="#c0564f" stroke="#9d4039" stroke-width="0.8"/><line x1="1036.6" y1="135" x2="1036.6" y2="149" stroke="#8f3a33" stroke-width="0.8" stroke-dasharray="1,1.5"/><path d="M1064 136.2 L1075.8 147.6 M1075.8 136.2 L1064 147.6" stroke="#c0564f" stroke-width="4.2" stroke-linecap="round"/><rect x="1123.5" y="135.5" width="55" height="39" rx="1.5" fill="#fff"/><g stroke="#c2c2c2" stroke-width="0.9"><line x1="1134.4" y1="136" x2="1134.4" y2="174"/><line x1="1150.5" y1="136" x2="1150.5" y2="174"/><line x1="1166.5" y1="136" x2="1166.5" y2="174"/><line x1="1124" y1="146.6" x2="1178" y2="146.6"/><line x1="1124" y1="162.6" x2="1178" y2="162.6"/></g><rect x="1123.5" y="135.5" width="55" height="39" rx="1.5" fill="none" stroke="#6e6e6e" stroke-width="1"/><rect x="1134.4" y="146.3" width="16.3" height="16.3" rx="2.2" fill="#4a84cf"/><rect x="1122.2" y="120" width="3.8" height="12" rx="1.9" fill="#4a84cf"/><rect x="1166.1" y="120" width="3.8" height="12" rx="1.9" fill="#4a84cf"/><path d="M1130.2 126 L1137.8 120 L1137.8 124.2 L1154.3 124.2 L1154.3 120 L1161.9 126 L1154.3 132 L1154.3 127.7 L1137.8 127.7 L1137.8 132 Z" fill="#4a84cf"/></svg>
</body></html>
